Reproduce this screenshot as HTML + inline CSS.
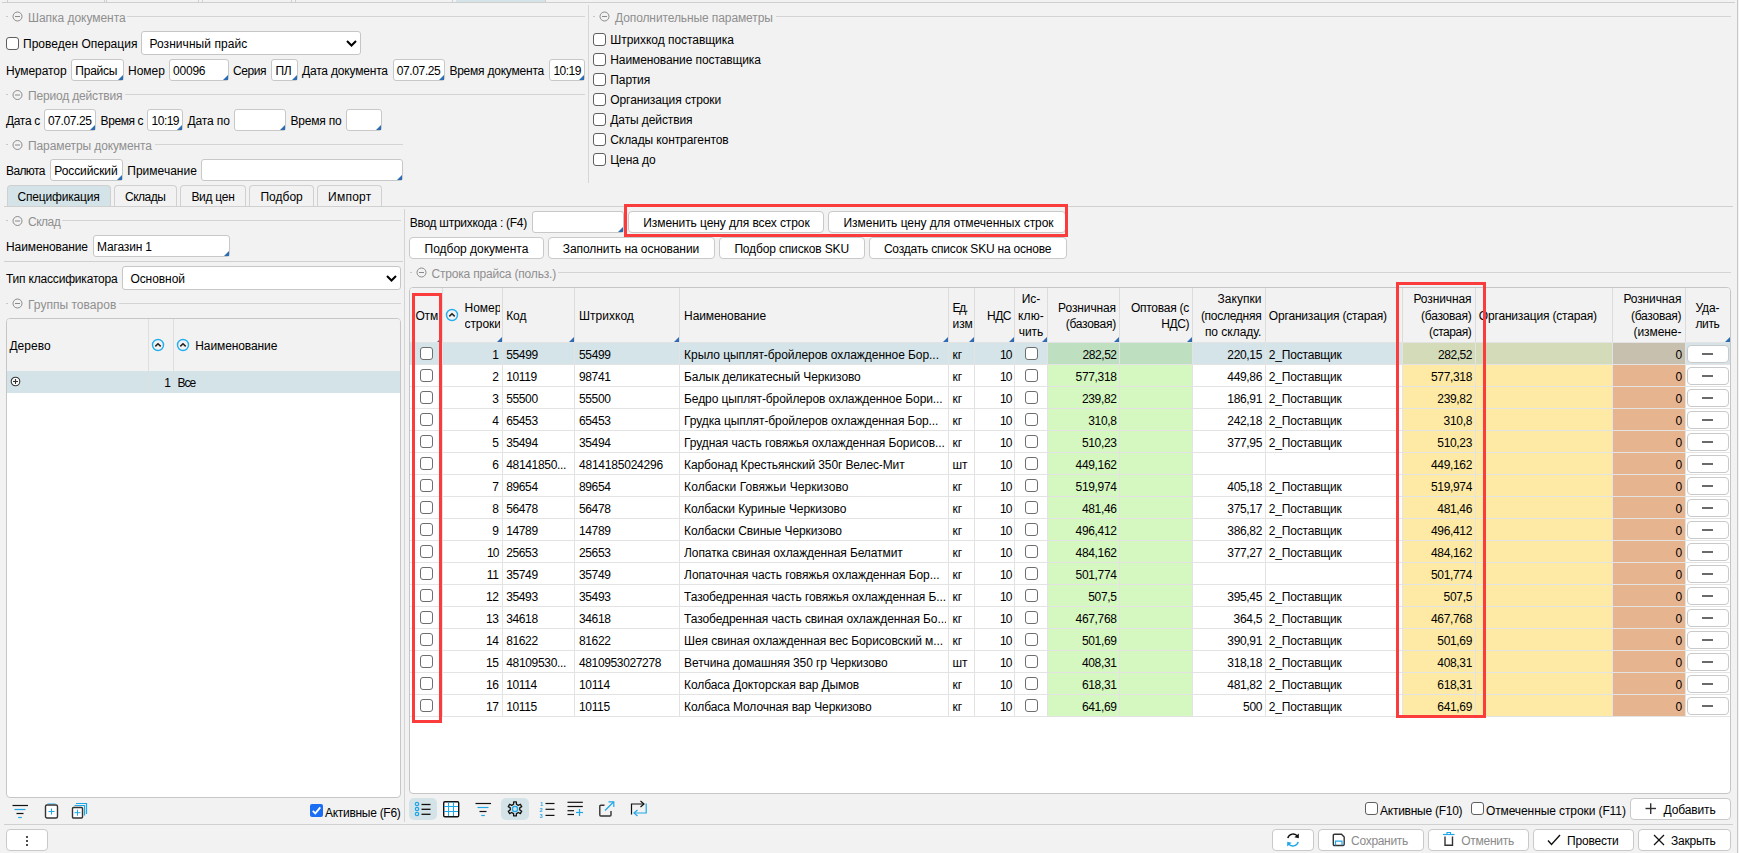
<!DOCTYPE html><html><head><meta charset="utf-8"><style>html,body{margin:0;padding:0;width:1739px;height:853px;overflow:hidden;background:#f2f2f2;position:relative;font-family:"Liberation Sans",sans-serif;font-size:12px;color:#000}.a{position:absolute}.t{position:absolute;white-space:nowrap;line-height:16px;height:16px}svg{overflow:visible}</style></head><body>
<div class="a" style="left:2px;top:2px;width:1733px;height:1px;background:#cfcfcf"></div>
<div class="a" style="left:7px;top:0px;width:1px;height:2px;background:#cfcfcf"></div>
<div class="a" style="left:104px;top:0px;width:1px;height:2px;background:#cfcfcf"></div>
<div class="a" style="left:106px;top:0px;width:1px;height:2px;background:#cfcfcf"></div>
<div class="a" style="left:198px;top:0px;width:1px;height:2px;background:#cfcfcf"></div>
<div class="a" style="left:202px;top:0px;width:1px;height:2px;background:#cfcfcf"></div>
<div class="a" style="left:291px;top:0px;width:1px;height:2px;background:#cfcfcf"></div>
<div class="a" style="left:295px;top:0px;width:1px;height:2px;background:#cfcfcf"></div>
<div class="a" style="left:452px;top:0px;width:1px;height:2px;background:#cfcfcf"></div>
<div class="a" style="left:545px;top:0px;width:1px;height:2px;background:#cfcfcf"></div>
<div class="a" style="left:456px;top:0px;width:89px;height:2px;background:#d4e3e8"></div>
<div class="a" style="left:1737px;top:0px;width:1px;height:853px;background:#c8c8c8"></div>
<div class="a" style="left:6px;top:16px;width:2px;height:1px;background:#c8c8c8"></div>
<svg class="a" style="left:11px;top:10px" width="12" height="12" viewBox="0 0 12 12"><circle cx="6.5" cy="6.5" r="4.5" fill="none" stroke="#8a8a8a" stroke-width="1"/><line x1="4.0" y1="6.5" x2="9.0" y2="6.5" stroke="#8a8a8a" stroke-width="1"/></svg>
<div class="t" style="left:28px;top:10px;color:#8f8f8f;font-size:12px;letter-spacing:-0.040px;">Шапка документа</div>
<div class="a" style="left:127px;top:16px;width:458px;height:1px;background:#d4d4d4"></div>
<div class="a" style="left:588px;top:5px;width:1px;height:178px;background:#d6d6d6"></div>
<div class="a" style="left:6px;top:37px;width:13px;height:13px;background:#fff;border:1px solid #5f5f5f;border-radius:3px;box-sizing:border-box"></div>
<div class="t" style="left:23px;top:36px;color:#000;font-size:12px;letter-spacing:0.013px;">Проведен Операция</div>
<div class="a" style="left:141px;top:31px;width:220px;height:24px;background:#fff;border:1px solid #c6c6c6;border-radius:3px;box-sizing:border-box"></div>
<div class="t" style="left:149.5px;top:36px;color:#000;font-size:12px;letter-spacing:0.051px;">Розничный прайс</div>
<svg class="a" style="left:345px;top:38px" width="13" height="10" viewBox="0 0 13 10"><polyline points="2,3 6.5,7.5 11,3" fill="none" stroke="#000" stroke-width="2"/></svg>
<div class="t" style="left:6px;top:63px;color:#000;font-size:12px;letter-spacing:-0.083px;">Нумератор</div>
<div class="a" style="left:71px;top:59px;width:53px;height:22px;background:#fff;border:1px solid #c8c8c8;border-radius:3px;box-sizing:border-box"></div>
<div class="a" style="left:118px;top:75px;width:0;height:0;border-left:5px solid transparent;border-bottom:5px solid #2b6cb3"></div>
<div class="t" style="left:75.3px;top:63px;color:#000;font-size:12px;letter-spacing:-0.235px;">Прайсы</div>
<div class="t" style="left:128px;top:63px;color:#000;font-size:12px;letter-spacing:-0.028px;">Номер</div>
<div class="a" style="left:169px;top:59px;width:60px;height:22px;background:#fff;border:1px solid #c8c8c8;border-radius:3px;box-sizing:border-box"></div>
<div class="a" style="left:223px;top:75px;width:0;height:0;border-left:5px solid transparent;border-bottom:5px solid #2b6cb3"></div>
<div class="t" style="left:173px;top:63px;color:#000;font-size:12px;letter-spacing:-0.215px;">00096</div>
<div class="t" style="left:233px;top:63px;color:#000;font-size:12px;letter-spacing:-0.404px;">Серия</div>
<div class="a" style="left:271px;top:59px;width:27px;height:22px;background:#fff;border:1px solid #c8c8c8;border-radius:3px;box-sizing:border-box"></div>
<div class="a" style="left:292px;top:75px;width:0;height:0;border-left:5px solid transparent;border-bottom:5px solid #2b6cb3"></div>
<div class="t" style="left:275.5px;top:63px;color:#000;font-size:12px;letter-spacing:-0.500px;">ПЛ</div>
<div class="t" style="left:302px;top:63px;color:#000;font-size:12px;letter-spacing:-0.187px;">Дата документа</div>
<div class="a" style="left:393px;top:59px;width:52px;height:22px;background:#fff;border:1px solid #c8c8c8;border-radius:3px;box-sizing:border-box"></div>
<div class="a" style="left:439px;top:75px;width:0;height:0;border-left:5px solid transparent;border-bottom:5px solid #2b6cb3"></div>
<div class="t" style="left:396.8px;top:63px;color:#000;font-size:12px;letter-spacing:-0.390px;">07.07.25</div>
<div class="t" style="left:449.4px;top:63px;color:#000;font-size:12px;letter-spacing:-0.224px;">Время документа</div>
<div class="a" style="left:549px;top:59px;width:36px;height:22px;background:#fff;border:1px solid #c8c8c8;border-radius:3px;box-sizing:border-box"></div>
<div class="a" style="left:579px;top:75px;width:0;height:0;border-left:5px solid transparent;border-bottom:5px solid #2b6cb3"></div>
<div class="t" style="left:553.4px;top:63px;color:#000;font-size:12px;letter-spacing:-0.526px;">10:19</div>
<div class="a" style="left:6px;top:94px;width:2px;height:1px;background:#c8c8c8"></div>
<svg class="a" style="left:11px;top:89px" width="12" height="12" viewBox="0 0 12 12"><circle cx="6.5" cy="6" r="4.5" fill="none" stroke="#8a8a8a" stroke-width="1"/><line x1="4.0" y1="6" x2="9.0" y2="6" stroke="#8a8a8a" stroke-width="1"/></svg>
<div class="t" style="left:28px;top:88px;color:#8f8f8f;font-size:12px;letter-spacing:-0.172px;">Период действия</div>
<div class="a" style="left:125px;top:94px;width:460px;height:1px;background:#d4d4d4"></div>
<div class="t" style="left:6px;top:112.7px;color:#000;font-size:12px;letter-spacing:-0.334px;">Дата с</div>
<div class="a" style="left:44px;top:109px;width:52px;height:22px;background:#fff;border:1px solid #c8c8c8;border-radius:3px;box-sizing:border-box"></div>
<div class="a" style="left:90px;top:125px;width:0;height:0;border-left:5px solid transparent;border-bottom:5px solid #2b6cb3"></div>
<div class="t" style="left:48px;top:112.7px;color:#000;font-size:12px;letter-spacing:-0.390px;">07.07.25</div>
<div class="t" style="left:100.6px;top:112.7px;color:#000;font-size:12px;letter-spacing:-0.420px;">Время с</div>
<div class="a" style="left:147px;top:109px;width:36px;height:22px;background:#fff;border:1px solid #c8c8c8;border-radius:3px;box-sizing:border-box"></div>
<div class="a" style="left:177px;top:125px;width:0;height:0;border-left:5px solid transparent;border-bottom:5px solid #2b6cb3"></div>
<div class="t" style="left:151.6px;top:112.7px;color:#000;font-size:12px;letter-spacing:-0.526px;">10:19</div>
<div class="t" style="left:187.5px;top:112.7px;color:#000;font-size:12px;letter-spacing:-0.125px;">Дата по</div>
<div class="a" style="left:234px;top:109px;width:52px;height:22px;background:#fff;border:1px solid #c8c8c8;border-radius:3px;box-sizing:border-box"></div>
<div class="a" style="left:280px;top:125px;width:0;height:0;border-left:5px solid transparent;border-bottom:5px solid #2b6cb3"></div>
<div class="t" style="left:290.4px;top:112.7px;color:#000;font-size:12px;letter-spacing:-0.189px;">Время по</div>
<div class="a" style="left:346px;top:109px;width:36px;height:22px;background:#fff;border:1px solid #c8c8c8;border-radius:3px;box-sizing:border-box"></div>
<div class="a" style="left:376px;top:125px;width:0;height:0;border-left:5px solid transparent;border-bottom:5px solid #2b6cb3"></div>
<div class="a" style="left:6px;top:144px;width:2px;height:1px;background:#c8c8c8"></div>
<svg class="a" style="left:11px;top:139px" width="12" height="12" viewBox="0 0 12 12"><circle cx="6.5" cy="6" r="4.5" fill="none" stroke="#8a8a8a" stroke-width="1"/><line x1="4.0" y1="6" x2="9.0" y2="6" stroke="#8a8a8a" stroke-width="1"/></svg>
<div class="t" style="left:28px;top:138px;color:#8f8f8f;font-size:12px;letter-spacing:-0.101px;">Параметры документа</div>
<div class="a" style="left:155px;top:144px;width:248px;height:1px;background:#d4d4d4"></div>
<div class="t" style="left:6px;top:163px;color:#000;font-size:12px;letter-spacing:-0.626px;">Валюта</div>
<div class="a" style="left:50px;top:159px;width:73px;height:22px;background:#fff;border:1px solid #c8c8c8;border-radius:3px;box-sizing:border-box"></div>
<div class="a" style="left:117px;top:175px;width:0;height:0;border-left:5px solid transparent;border-bottom:5px solid #2b6cb3"></div>
<div class="t" style="left:54.3px;top:163px;color:#000;font-size:12px;letter-spacing:-0.092px;">Российский</div>
<div class="t" style="left:127.3px;top:163px;color:#000;font-size:12px;letter-spacing:0.013px;">Примечание</div>
<div class="a" style="left:201px;top:159px;width:202px;height:22px;background:#fff;border:1px solid #c8c8c8;border-radius:3px;box-sizing:border-box"></div>
<div class="a" style="left:397px;top:175px;width:0;height:0;border-left:5px solid transparent;border-bottom:5px solid #2b6cb3"></div>
<div class="a" style="left:593px;top:16px;width:2px;height:1px;background:#c8c8c8"></div>
<svg class="a" style="left:598px;top:10px" width="12" height="12" viewBox="0 0 12 12"><circle cx="6.5" cy="6.5" r="4.5" fill="none" stroke="#8a8a8a" stroke-width="1"/><line x1="4.0" y1="6.5" x2="9.0" y2="6.5" stroke="#8a8a8a" stroke-width="1"/></svg>
<div class="t" style="left:615px;top:10px;color:#8f8f8f;font-size:12px;letter-spacing:-0.099px;">Дополнительные параметры</div>
<div class="a" style="left:776px;top:16px;width:955px;height:1px;background:#d4d4d4"></div>
<div class="a" style="left:593px;top:33px;width:13px;height:13px;background:#fff;border:1px solid #5f5f5f;border-radius:3px;box-sizing:border-box"></div>
<div class="t" style="left:610.3px;top:32px;color:#000;font-size:12px;letter-spacing:-0.040px;">Штрихкод поставщика</div>
<div class="a" style="left:593px;top:53px;width:13px;height:13px;background:#fff;border:1px solid #5f5f5f;border-radius:3px;box-sizing:border-box"></div>
<div class="t" style="left:610.3px;top:52px;color:#000;font-size:12px;letter-spacing:-0.100px;">Наименование поставщика</div>
<div class="a" style="left:593px;top:73px;width:13px;height:13px;background:#fff;border:1px solid #5f5f5f;border-radius:3px;box-sizing:border-box"></div>
<div class="t" style="left:610.3px;top:72px;color:#000;font-size:12px;letter-spacing:-0.101px;">Партия</div>
<div class="a" style="left:593px;top:93px;width:13px;height:13px;background:#fff;border:1px solid #5f5f5f;border-radius:3px;box-sizing:border-box"></div>
<div class="t" style="left:610.3px;top:92px;color:#000;font-size:12px;letter-spacing:-0.094px;">Организация строки</div>
<div class="a" style="left:593px;top:113px;width:13px;height:13px;background:#fff;border:1px solid #5f5f5f;border-radius:3px;box-sizing:border-box"></div>
<div class="t" style="left:610.3px;top:112px;color:#000;font-size:12px;letter-spacing:-0.096px;">Даты действия</div>
<div class="a" style="left:593px;top:133px;width:13px;height:13px;background:#fff;border:1px solid #5f5f5f;border-radius:3px;box-sizing:border-box"></div>
<div class="t" style="left:610.3px;top:132px;color:#000;font-size:12px;letter-spacing:-0.095px;">Склады контрагентов</div>
<div class="a" style="left:593px;top:153px;width:13px;height:13px;background:#fff;border:1px solid #5f5f5f;border-radius:3px;box-sizing:border-box"></div>
<div class="t" style="left:610.3px;top:152px;color:#000;font-size:12px;letter-spacing:-0.098px;">Цена до</div>
<div class="a" style="left:7px;top:185px;width:104px;height:21px;background:#d4e3e8;border:1px solid #d0d0d0;border-bottom:none;border-radius:4px 4px 0 0;box-sizing:border-box"></div>
<div class="t" style="left:17.5px;top:189px;color:#000;font-size:12px;letter-spacing:-0.180px;">Спецификация</div>
<div class="a" style="left:114px;top:185px;width:63px;height:21px;background:#f2f2f2;border:1px solid #d0d0d0;border-bottom:none;border-radius:4px 4px 0 0;box-sizing:border-box"></div>
<div class="t" style="left:125px;top:189px;color:#000;font-size:12px;letter-spacing:-0.477px;">Склады</div>
<div class="a" style="left:180px;top:185px;width:66px;height:21px;background:#f2f2f2;border:1px solid #d0d0d0;border-bottom:none;border-radius:4px 4px 0 0;box-sizing:border-box"></div>
<div class="t" style="left:191.4px;top:189px;color:#000;font-size:12px;letter-spacing:-0.271px;">Вид цен</div>
<div class="a" style="left:249px;top:185px;width:65px;height:21px;background:#f2f2f2;border:1px solid #d0d0d0;border-bottom:none;border-radius:4px 4px 0 0;box-sizing:border-box"></div>
<div class="t" style="left:260.4px;top:189px;color:#000;font-size:12px;letter-spacing:0.022px;">Подбор</div>
<div class="a" style="left:317px;top:185px;width:65px;height:21px;background:#f2f2f2;border:1px solid #d0d0d0;border-bottom:none;border-radius:4px 4px 0 0;box-sizing:border-box"></div>
<div class="t" style="left:328px;top:189px;color:#000;font-size:12px;letter-spacing:0.258px;">Импорт</div>
<div class="a" style="left:4px;top:206px;width:1729px;height:1px;background:#d0d0d0"></div>
<div class="a" style="left:6px;top:220px;width:2px;height:1px;background:#c8c8c8"></div>
<svg class="a" style="left:11px;top:215px" width="12" height="12" viewBox="0 0 12 12"><circle cx="6.5" cy="6" r="4.5" fill="none" stroke="#8a8a8a" stroke-width="1"/><line x1="4.0" y1="6" x2="9.0" y2="6" stroke="#8a8a8a" stroke-width="1"/></svg>
<div class="t" style="left:28px;top:214px;color:#8f8f8f;font-size:12px;letter-spacing:-0.507px;">Склад</div>
<div class="a" style="left:62px;top:220px;width:339px;height:1px;background:#d4d4d4"></div>
<div class="t" style="left:6px;top:238.5px;color:#000;font-size:12px;letter-spacing:-0.104px;">Наименование</div>
<div class="a" style="left:93px;top:235px;width:137px;height:22px;background:#fff;border:1px solid #c8c8c8;border-radius:3px;box-sizing:border-box"></div>
<div class="a" style="left:224px;top:251px;width:0;height:0;border-left:5px solid transparent;border-bottom:5px solid #2b6cb3"></div>
<div class="t" style="left:97px;top:238.5px;color:#000;font-size:12px;letter-spacing:-0.166px;">Магазин 1</div>
<div class="a" style="left:4px;top:261px;width:399px;height:1px;background:#d0d0d0"></div>
<div class="t" style="left:6px;top:271px;color:#000;font-size:12px;letter-spacing:-0.194px;">Тип классификатора</div>
<div class="a" style="left:122px;top:266px;width:279px;height:24px;background:#fff;border:1px solid #c6c6c6;border-radius:3px;box-sizing:border-box"></div>
<div class="t" style="left:130.4px;top:271px;color:#000;font-size:12px;letter-spacing:-0.064px;">Основной</div>
<svg class="a" style="left:385px;top:273px" width="13" height="10" viewBox="0 0 13 10"><polyline points="2,3 6.5,7.5 11,3" fill="none" stroke="#000" stroke-width="2"/></svg>
<div class="a" style="left:6px;top:303px;width:2px;height:1px;background:#c8c8c8"></div>
<svg class="a" style="left:11px;top:297px" width="12" height="12" viewBox="0 0 12 12"><circle cx="6.5" cy="6.5" r="4.5" fill="none" stroke="#8a8a8a" stroke-width="1"/><line x1="4.0" y1="6.5" x2="9.0" y2="6.5" stroke="#8a8a8a" stroke-width="1"/></svg>
<div class="t" style="left:28px;top:296.5px;color:#8f8f8f;font-size:12px;letter-spacing:0.021px;">Группы товаров</div>
<div class="a" style="left:119px;top:303px;width:282px;height:1px;background:#d4d4d4"></div>
<div class="a" style="left:404px;top:209px;width:1px;height:613px;background:#d4d4d4"></div>
<div class="a" style="left:6px;top:318px;width:395px;height:480px;background:#fff;border:1px solid #c6c6c6;border-radius:4px;box-sizing:border-box"></div>
<div class="a" style="left:7px;top:319px;width:393px;height:52px;background:#f2f2f2;border-radius:3px 3px 0 0"></div>
<div class="a" style="left:7px;top:371px;width:393px;height:22px;background:#d4e3e8"></div>
<div class="a" style="left:148px;top:319px;width:1px;height:74px;background:#dedede"></div>
<div class="a" style="left:173px;top:319px;width:1px;height:74px;background:#dedede"></div>
<div class="t" style="left:9.4px;top:338px;color:#000;font-size:12px;letter-spacing:0.040px;">Дерево</div>
<svg class="a" style="left:151px;top:338px" width="14" height="14" viewBox="0 0 14 14"><circle cx="7" cy="7" r="5.5" fill="none" stroke="#22aeee" stroke-width="1.4"/><polyline points="4.3,8.4 7,5.7 9.7,8.4" fill="none" stroke="#222" stroke-width="1.5"/></svg>
<svg class="a" style="left:176px;top:338px" width="14" height="14" viewBox="0 0 14 14"><circle cx="7" cy="7" r="5.5" fill="none" stroke="#22aeee" stroke-width="1.4"/><polyline points="4.3,8.4 7,5.7 9.7,8.4" fill="none" stroke="#222" stroke-width="1.5"/></svg>
<div class="t" style="left:195.3px;top:338px;color:#000;font-size:12px;letter-spacing:-0.104px;">Наименование</div>
<svg class="a" style="left:10px;top:376px" width="11" height="11" viewBox="0 0 11 11"><circle cx="5.5" cy="5.5" r="4.3" fill="#fff" stroke="#333" stroke-width="1.1"/><line x1="3" y1="5.5" x2="8" y2="5.5" stroke="#333" stroke-width="1.1"/><line x1="5.5" y1="3" x2="5.5" y2="8" stroke="#333" stroke-width="1.1"/></svg>
<div class="t" style="left:-129.4px;width:300px;text-align:right;top:374.6px;color:#000;letter-spacing:-0.368px;">1</div>
<div class="t" style="left:177.4px;top:374.6px;color:#000;font-size:12px;letter-spacing:-0.929px;">Все</div>
<svg class="a" style="left:12px;top:804px" width="18" height="16" viewBox="0 0 18 16"><line x1="0.5" y1="1.5" x2="16" y2="1.5" stroke="#111" stroke-width="1.2"/><line x1="2.5" y1="5.5" x2="13.5" y2="5.5" stroke="#1ea7e8" stroke-width="1.2"/><line x1="4.5" y1="9.5" x2="11.5" y2="9.5" stroke="#111" stroke-width="1.2"/><line x1="6.2" y1="13.5" x2="9.8" y2="13.5" stroke="#1ea7e8" stroke-width="1.2"/></svg>
<svg class="a" style="left:44px;top:802px" width="16" height="18" viewBox="0 0 16 18"><line x1="3.5" y1="1.5" x2="11.5" y2="1.5" stroke="#7fd0f5" stroke-width="1"/><rect x="1.5" y="3" width="12" height="13" rx="1.5" fill="#fff" stroke="#333" stroke-width="1.4"/><line x1="4.5" y1="9.5" x2="10.5" y2="9.5" stroke="#1ea7e8" stroke-width="1"/><line x1="7.5" y1="6.5" x2="7.5" y2="12.5" stroke="#1ea7e8" stroke-width="1"/></svg>
<svg class="a" style="left:71px;top:802px" width="18" height="18" viewBox="0 0 18 18"><polyline points="5,1.5 15.5,1.5 15.5,12" fill="none" stroke="#1ea7e8" stroke-width="1.2"/><polyline points="3.5,3.5 13.5,3.5 13.5,13.5" fill="none" stroke="#1ea7e8" stroke-width="1.2"/><rect x="1.5" y="5.5" width="10" height="10.5" rx="1" fill="#fff" stroke="#333" stroke-width="1.4"/><line x1="3.5" y1="10.7" x2="9.5" y2="10.7" stroke="#1ea7e8" stroke-width="1"/><line x1="6.5" y1="7.7" x2="6.5" y2="13.7" stroke="#1ea7e8" stroke-width="1"/></svg>
<div class="a" style="left:310px;top:804px;width:13px;height:13px;background:#1b6ef3;border-radius:2px"></div>
<svg class="a" style="left:310px;top:804px" width="13" height="13" viewBox="0 0 13 13"><polyline points="2.8,6.8 5.3,9.3 10.3,3.3" fill="none" stroke="#fff" stroke-width="1.8"/></svg>
<div class="t" style="left:325px;top:805px;color:#000;font-size:12px;letter-spacing:-0.286px;">Активные (F6)</div>
<div class="a" style="left:4px;top:824px;width:1729px;height:1px;background:#d0d0d0"></div>
<div class="a" style="left:6px;top:829px;width:42px;height:22px;background:#fff;border:1px solid #c9c9c9;border-radius:4px;box-sizing:border-box"></div>
<div class="a" style="left:25.5px;top:836px;width:2.0px;height:2px;background:#111;border-radius:1px"></div>
<div class="a" style="left:25.5px;top:840px;width:2.0px;height:2px;background:#111;border-radius:1px"></div>
<div class="a" style="left:25.5px;top:844px;width:2.0px;height:2px;background:#111;border-radius:1px"></div>
<div class="t" style="left:409.7px;top:214.8px;color:#000;font-size:12px;letter-spacing:-0.270px;">Ввод штрихкода : (F4)</div>
<div class="a" style="left:532px;top:211px;width:92px;height:22px;background:#fff;border:1px solid #c8c8c8;border-radius:3px;box-sizing:border-box"></div>
<div class="a" style="left:618px;top:227px;width:0;height:0;border-left:5px solid transparent;border-bottom:5px solid #2b6cb3"></div>
<div class="a" style="left:628px;top:211px;width:196px;height:22px;background:#fff;border:1px solid #c9c9c9;border-radius:4px;box-sizing:border-box"></div>
<div class="t" style="left:643.3px;top:215px;color:#000;font-size:12px;letter-spacing:-0.087px;">Изменить цену для всех строк</div>
<div class="a" style="left:828px;top:211px;width:238px;height:22px;background:#fff;border:1px solid #c9c9c9;border-radius:4px;box-sizing:border-box"></div>
<div class="t" style="left:843.5px;top:215px;color:#000;font-size:12px;letter-spacing:-0.037px;">Изменить цену для отмеченных строк</div>
<div class="a" style="left:409px;top:237px;width:135px;height:22px;background:#fff;border:1px solid #c9c9c9;border-radius:4px;box-sizing:border-box"></div>
<div class="t" style="left:424.6px;top:241px;color:#000;font-size:12px;letter-spacing:-0.026px;">Подбор документа</div>
<div class="a" style="left:548px;top:237px;width:167px;height:22px;background:#fff;border:1px solid #c9c9c9;border-radius:4px;box-sizing:border-box"></div>
<div class="t" style="left:562.8px;top:241px;color:#000;font-size:12px;letter-spacing:-0.064px;">Заполнить на основании</div>
<div class="a" style="left:719px;top:237px;width:146px;height:22px;background:#fff;border:1px solid #c9c9c9;border-radius:4px;box-sizing:border-box"></div>
<div class="t" style="left:734.4px;top:241px;color:#000;font-size:12px;letter-spacing:-0.152px;">Подбор списков SKU</div>
<div class="a" style="left:869px;top:237px;width:198px;height:22px;background:#fff;border:1px solid #c9c9c9;border-radius:4px;box-sizing:border-box"></div>
<div class="t" style="left:883.9px;top:241px;color:#000;font-size:12px;letter-spacing:-0.206px;">Создать список SKU на основе</div>
<div class="a" style="left:624px;top:204px;width:444px;height:33px;border:3px solid #fb3c3c;box-sizing:border-box"></div>
<div class="a" style="left:410px;top:272px;width:2px;height:1px;background:#c8c8c8"></div>
<svg class="a" style="left:415px;top:266px" width="12" height="12" viewBox="0 0 12 12"><circle cx="6.5" cy="6.5" r="4.5" fill="none" stroke="#8a8a8a" stroke-width="1"/><line x1="4.0" y1="6.5" x2="9.0" y2="6.5" stroke="#8a8a8a" stroke-width="1"/></svg>
<div class="t" style="left:431.5px;top:265.5px;color:#8f8f8f;font-size:12px;letter-spacing:-0.185px;">Строка прайса (польз.)</div>
<div class="a" style="left:558px;top:272px;width:1173px;height:1px;background:#d4d4d4"></div>
<div class="a" style="left:409px;top:287px;width:1322px;height:507px;background:#fff;border:1px solid #c6c6c6;border-radius:4px;box-sizing:border-box"></div>
<div class="a" style="left:410px;top:288px;width:1320px;height:54px;background:#f2f2f2;border-radius:3px 3px 0 0"></div>
<div class="a" style="left:442px;top:288px;width:1px;height:54px;background:#dcdcdc"></div>
<div class="a" style="left:502px;top:288px;width:1px;height:54px;background:#dcdcdc"></div>
<div class="a" style="left:574px;top:288px;width:1px;height:54px;background:#dcdcdc"></div>
<div class="a" style="left:679px;top:288px;width:1px;height:54px;background:#dcdcdc"></div>
<div class="a" style="left:948px;top:288px;width:1px;height:54px;background:#dcdcdc"></div>
<div class="a" style="left:974px;top:288px;width:1px;height:54px;background:#dcdcdc"></div>
<div class="a" style="left:1014px;top:288px;width:1px;height:54px;background:#dcdcdc"></div>
<div class="a" style="left:1047px;top:288px;width:1px;height:54px;background:#dcdcdc"></div>
<div class="a" style="left:1119px;top:288px;width:1px;height:54px;background:#dcdcdc"></div>
<div class="a" style="left:1192px;top:288px;width:1px;height:54px;background:#dcdcdc"></div>
<div class="a" style="left:1265px;top:288px;width:1px;height:54px;background:#dcdcdc"></div>
<div class="a" style="left:1402px;top:288px;width:1px;height:54px;background:#dcdcdc"></div>
<div class="a" style="left:1475px;top:288px;width:1px;height:54px;background:#dcdcdc"></div>
<div class="a" style="left:1612px;top:288px;width:1px;height:54px;background:#dcdcdc"></div>
<div class="a" style="left:1685px;top:288px;width:1px;height:54px;background:#dcdcdc"></div>
<div class="a" style="left:437px;top:337px;width:0;height:0;border-left:5px solid transparent;border-bottom:5px solid #2b6cb3"></div>
<div class="a" style="left:497px;top:337px;width:0;height:0;border-left:5px solid transparent;border-bottom:5px solid #2b6cb3"></div>
<div class="a" style="left:569px;top:337px;width:0;height:0;border-left:5px solid transparent;border-bottom:5px solid #2b6cb3"></div>
<div class="a" style="left:674px;top:337px;width:0;height:0;border-left:5px solid transparent;border-bottom:5px solid #2b6cb3"></div>
<div class="a" style="left:943px;top:337px;width:0;height:0;border-left:5px solid transparent;border-bottom:5px solid #2b6cb3"></div>
<div class="a" style="left:969px;top:337px;width:0;height:0;border-left:5px solid transparent;border-bottom:5px solid #2b6cb3"></div>
<div class="a" style="left:1009px;top:337px;width:0;height:0;border-left:5px solid transparent;border-bottom:5px solid #2b6cb3"></div>
<div class="a" style="left:1042px;top:337px;width:0;height:0;border-left:5px solid transparent;border-bottom:5px solid #2b6cb3"></div>
<div class="a" style="left:1114px;top:337px;width:0;height:0;border-left:5px solid transparent;border-bottom:5px solid #2b6cb3"></div>
<div class="a" style="left:1187px;top:337px;width:0;height:0;border-left:5px solid transparent;border-bottom:5px solid #2b6cb3"></div>
<div class="a" style="left:1725px;top:337px;width:0;height:0;border-left:5px solid transparent;border-bottom:5px solid #2b6cb3"></div>
<div class="t" style="left:415.4px;top:308px;color:#000;font-size:12px;letter-spacing:-0.115px;width:26px;overflow:hidden">Отм</div>
<svg class="a" style="left:445px;top:308px" width="14" height="14" viewBox="0 0 14 14"><circle cx="7" cy="7" r="5.5" fill="none" stroke="#22aeee" stroke-width="1.4"/><polyline points="4.3,8.4 7,5.7 9.7,8.4" fill="none" stroke="#222" stroke-width="1.5"/></svg>
<div class="t" style="left:464.5px;top:299.6px;color:#000;font-size:12px;letter-spacing:-0.028px;width:35px;overflow:hidden">Номер</div>
<div class="t" style="left:464.5px;top:315.5px;color:#000;font-size:12px;letter-spacing:-0.092px;width:35px;overflow:hidden">строки</div>
<div class="t" style="left:506.2px;top:308px;color:#000;font-size:12px;letter-spacing:-0.102px;">Код</div>
<div class="t" style="left:579px;top:308px;color:#000;font-size:12px;letter-spacing:0.029px;">Штрихкод</div>
<div class="t" style="left:684.1px;top:308px;color:#000;font-size:12px;letter-spacing:-0.104px;">Наименование</div>
<div class="t" style="left:952.6px;top:299.6px;color:#000;font-size:12px;letter-spacing:-1.281px;">Ед.</div>
<div class="t" style="left:952.6px;top:315.5px;color:#000;font-size:12px;letter-spacing:-0.102px;width:20px;overflow:hidden">изм</div>
<div class="t" style="left:711px;width:300px;text-align:right;top:308px;color:#000;letter-spacing:-0.490px;">НДС</div>
<div class="t" style="left:881px;width:300px;text-align:center;top:291.4px;color:#000;letter-spacing:-0.108px;">Ис-</div>
<div class="t" style="left:881px;width:300px;text-align:center;top:307.5px;color:#000;letter-spacing:0.127px;">клю-</div>
<div class="t" style="left:881px;width:300px;text-align:center;top:323.5px;color:#000;letter-spacing:-0.101px;">чить</div>
<div class="t" style="left:816px;width:300px;text-align:right;top:299.6px;color:#000;letter-spacing:-0.112px;">Розничная</div>
<div class="t" style="left:816px;width:300px;text-align:right;top:315.5px;color:#000;letter-spacing:-0.255px;">(базовая)</div>
<div class="t" style="left:889px;width:300px;text-align:right;top:299.6px;color:#000;letter-spacing:-0.251px;">Оптовая (с</div>
<div class="t" style="left:889px;width:300px;text-align:right;top:315.5px;color:#000;letter-spacing:-0.442px;">НДС)</div>
<div class="t" style="left:961.4000000000001px;width:300px;text-align:right;top:291.4px;color:#000;letter-spacing:0.005px;">Закупки</div>
<div class="t" style="left:961.4000000000001px;width:300px;text-align:right;top:307.5px;color:#000;letter-spacing:-0.272px;">(последняя</div>
<div class="t" style="left:961.4000000000001px;width:300px;text-align:right;top:323.5px;color:#000;letter-spacing:-0.020px;">по складу.</div>
<div class="t" style="left:1268.8px;top:308px;color:#000;font-size:12px;letter-spacing:-0.175px;">Организация (старая)</div>
<div class="t" style="left:1171.4px;width:300px;text-align:right;top:291.4px;color:#000;letter-spacing:-0.112px;">Розничная</div>
<div class="t" style="left:1171.4px;width:300px;text-align:right;top:307.5px;color:#000;letter-spacing:-0.255px;">(базовая)</div>
<div class="t" style="left:1171.4px;width:300px;text-align:right;top:323.5px;color:#000;letter-spacing:-0.447px;">(старая)</div>
<div class="t" style="left:1478.8px;top:308px;color:#000;font-size:12px;letter-spacing:-0.175px;">Организация (старая)</div>
<div class="t" style="left:1381.3px;width:300px;text-align:right;top:291.4px;color:#000;letter-spacing:-0.112px;">Розничная</div>
<div class="t" style="left:1381.3px;width:300px;text-align:right;top:307.5px;color:#000;letter-spacing:-0.255px;">(базовая)</div>
<div class="t" style="left:1381.3px;width:300px;text-align:right;top:323.5px;color:#000;letter-spacing:-0.090px;">(измене-</div>
<div class="t" style="left:1557.5px;width:300px;text-align:center;top:299.6px;color:#000;letter-spacing:-0.090px;">Уда-</div>
<div class="t" style="left:1557.5px;width:300px;text-align:center;top:315.5px;color:#000;letter-spacing:-0.363px;">лить</div>
<div class="a" style="left:410px;top:343px;width:1320px;height:21px;background:#d4e4e9"></div>
<div class="a" style="left:1047px;top:343px;width:145px;height:21px;background:#bfe0c0"></div>
<div class="a" style="left:1402px;top:343px;width:210px;height:21px;background:#d3dbb8"></div>
<div class="a" style="left:1612px;top:343px;width:73px;height:21px;background:#c8c0ae"></div>
<div class="a" style="left:420px;top:347px;width:13px;height:13px;background:#fff;border:1px solid #6e6e6e;border-radius:3px;box-sizing:border-box"></div>
<div class="t" style="left:198.60000000000002px;width:300px;text-align:right;top:346.5px;color:#000;letter-spacing:-0.368px;">1</div>
<div class="t" style="left:506.2px;top:346.5px;color:#000;font-size:12px;letter-spacing:-0.335px;">55499</div>
<div class="t" style="left:579px;top:346.5px;color:#000;font-size:12px;letter-spacing:-0.335px;">55499</div>
<div class="t" style="left:684.1px;top:346.5px;color:#000;font-size:12px;letter-spacing:-0.057px;width:262px;overflow:hidden">Крыло цыплят-бройлеров охлажденное Бор...</div>
<div class="t" style="left:952.6px;top:346.5px;color:#000;font-size:12px;letter-spacing:-0.072px;">кг</div>
<div class="t" style="left:711.6px;width:300px;text-align:right;top:346.5px;color:#000;letter-spacing:-0.830px;">10</div>
<div class="a" style="left:1025px;top:347px;width:13px;height:13px;background:#fff;border:1px solid #6e6e6e;border-radius:3px;box-sizing:border-box"></div>
<div class="t" style="left:816.5999999999999px;width:300px;text-align:right;top:346.5px;color:#000;letter-spacing:-0.451px;">282,52</div>
<div class="t" style="left:962.0px;width:300px;text-align:right;top:346.5px;color:#000;letter-spacing:-0.336px;">220,15</div>
<div class="t" style="left:1268.8px;top:346.5px;color:#000;font-size:12px;letter-spacing:-0.190px;">2_Поставщик</div>
<div class="t" style="left:1172.0px;width:300px;text-align:right;top:346.5px;color:#000;letter-spacing:-0.451px;">282,52</div>
<div class="t" style="left:1381.8999999999999px;width:300px;text-align:right;top:346.5px;color:#000;letter-spacing:-0.368px;">0</div>
<div class="a" style="left:1687px;top:345px;width:42px;height:18px;background:#fff;border:1px solid #c9c9c9;border-radius:4px;box-sizing:border-box"></div>
<div class="a" style="left:1702px;top:353px;width:11px;height:2px;background:#6a6a6a"></div>
<div class="a" style="left:410px;top:364px;width:1320px;height:22px;background:#fff"></div>
<div class="a" style="left:1047px;top:364px;width:145px;height:22px;background:#d5f7c0"></div>
<div class="a" style="left:1402px;top:364px;width:210px;height:22px;background:#feeaa5"></div>
<div class="a" style="left:1612px;top:364px;width:73px;height:22px;background:#e7b490"></div>
<div class="a" style="left:420px;top:369px;width:13px;height:13px;background:#fff;border:1px solid #6e6e6e;border-radius:3px;box-sizing:border-box"></div>
<div class="t" style="left:198.60000000000002px;width:300px;text-align:right;top:368.5px;color:#000;letter-spacing:-0.368px;">2</div>
<div class="t" style="left:506.2px;top:368.5px;color:#000;font-size:12px;letter-spacing:-0.357px;">10119</div>
<div class="t" style="left:579px;top:368.5px;color:#000;font-size:12px;letter-spacing:-0.367px;">98741</div>
<div class="t" style="left:684.1px;top:368.5px;color:#000;font-size:12px;letter-spacing:-0.095px;width:262px;overflow:hidden">Балык деликатесный Черкизово</div>
<div class="t" style="left:952.6px;top:368.5px;color:#000;font-size:12px;letter-spacing:-0.072px;">кг</div>
<div class="t" style="left:711.6px;width:300px;text-align:right;top:368.5px;color:#000;letter-spacing:-0.830px;">10</div>
<div class="a" style="left:1025px;top:369px;width:13px;height:13px;background:#fff;border:1px solid #6e6e6e;border-radius:3px;box-sizing:border-box"></div>
<div class="t" style="left:816.5999999999999px;width:300px;text-align:right;top:368.5px;color:#000;letter-spacing:-0.341px;">577,318</div>
<div class="t" style="left:962.0px;width:300px;text-align:right;top:368.5px;color:#000;letter-spacing:-0.336px;">449,86</div>
<div class="t" style="left:1268.8px;top:368.5px;color:#000;font-size:12px;letter-spacing:-0.190px;">2_Поставщик</div>
<div class="t" style="left:1172.0px;width:300px;text-align:right;top:368.5px;color:#000;letter-spacing:-0.341px;">577,318</div>
<div class="t" style="left:1381.8999999999999px;width:300px;text-align:right;top:368.5px;color:#000;letter-spacing:-0.368px;">0</div>
<div class="a" style="left:1687px;top:367px;width:42px;height:18px;background:#fff;border:1px solid #c9c9c9;border-radius:4px;box-sizing:border-box"></div>
<div class="a" style="left:1702px;top:375px;width:11px;height:2px;background:#6a6a6a"></div>
<div class="a" style="left:410px;top:386px;width:1320px;height:22px;background:#fff"></div>
<div class="a" style="left:1047px;top:386px;width:145px;height:22px;background:#d5f7c0"></div>
<div class="a" style="left:1402px;top:386px;width:210px;height:22px;background:#feeaa5"></div>
<div class="a" style="left:1612px;top:386px;width:73px;height:22px;background:#e7b490"></div>
<div class="a" style="left:420px;top:391px;width:13px;height:13px;background:#fff;border:1px solid #6e6e6e;border-radius:3px;box-sizing:border-box"></div>
<div class="t" style="left:198.60000000000002px;width:300px;text-align:right;top:390.5px;color:#000;letter-spacing:-0.368px;">3</div>
<div class="t" style="left:506.2px;top:390.5px;color:#000;font-size:12px;letter-spacing:-0.367px;">55500</div>
<div class="t" style="left:579px;top:390.5px;color:#000;font-size:12px;letter-spacing:-0.367px;">55500</div>
<div class="t" style="left:684.1px;top:390.5px;color:#000;font-size:12px;letter-spacing:-0.094px;width:262px;overflow:hidden">Бедро цыплят-бройлеров охлажденное Бори...</div>
<div class="t" style="left:952.6px;top:390.5px;color:#000;font-size:12px;letter-spacing:-0.072px;">кг</div>
<div class="t" style="left:711.6px;width:300px;text-align:right;top:390.5px;color:#000;letter-spacing:-0.830px;">10</div>
<div class="a" style="left:1025px;top:391px;width:13px;height:13px;background:#fff;border:1px solid #6e6e6e;border-radius:3px;box-sizing:border-box"></div>
<div class="t" style="left:816.5999999999999px;width:300px;text-align:right;top:390.5px;color:#000;letter-spacing:-0.336px;">239,82</div>
<div class="t" style="left:962.0px;width:300px;text-align:right;top:390.5px;color:#000;letter-spacing:-0.336px;">186,91</div>
<div class="t" style="left:1268.8px;top:390.5px;color:#000;font-size:12px;letter-spacing:-0.190px;">2_Поставщик</div>
<div class="t" style="left:1172.0px;width:300px;text-align:right;top:390.5px;color:#000;letter-spacing:-0.336px;">239,82</div>
<div class="t" style="left:1381.8999999999999px;width:300px;text-align:right;top:390.5px;color:#000;letter-spacing:-0.368px;">0</div>
<div class="a" style="left:1687px;top:389px;width:42px;height:18px;background:#fff;border:1px solid #c9c9c9;border-radius:4px;box-sizing:border-box"></div>
<div class="a" style="left:1702px;top:397px;width:11px;height:2px;background:#6a6a6a"></div>
<div class="a" style="left:410px;top:408px;width:1320px;height:22px;background:#fff"></div>
<div class="a" style="left:1047px;top:408px;width:145px;height:22px;background:#d5f7c0"></div>
<div class="a" style="left:1402px;top:408px;width:210px;height:22px;background:#feeaa5"></div>
<div class="a" style="left:1612px;top:408px;width:73px;height:22px;background:#e7b490"></div>
<div class="a" style="left:420px;top:413px;width:13px;height:13px;background:#fff;border:1px solid #6e6e6e;border-radius:3px;box-sizing:border-box"></div>
<div class="t" style="left:198.60000000000002px;width:300px;text-align:right;top:412.5px;color:#000;letter-spacing:-0.368px;">4</div>
<div class="t" style="left:506.2px;top:412.5px;color:#000;font-size:12px;letter-spacing:-0.367px;">65453</div>
<div class="t" style="left:579px;top:412.5px;color:#000;font-size:12px;letter-spacing:-0.367px;">65453</div>
<div class="t" style="left:684.1px;top:412.5px;color:#000;font-size:12px;letter-spacing:-0.092px;width:262px;overflow:hidden">Грудка цыплят-бройлеров охлажденная Бор...</div>
<div class="t" style="left:952.6px;top:412.5px;color:#000;font-size:12px;letter-spacing:-0.072px;">кг</div>
<div class="t" style="left:711.6px;width:300px;text-align:right;top:412.5px;color:#000;letter-spacing:-0.830px;">10</div>
<div class="a" style="left:1025px;top:413px;width:13px;height:13px;background:#fff;border:1px solid #6e6e6e;border-radius:3px;box-sizing:border-box"></div>
<div class="t" style="left:816.5999999999999px;width:300px;text-align:right;top:412.5px;color:#000;letter-spacing:-0.330px;">310,8</div>
<div class="t" style="left:962.0px;width:300px;text-align:right;top:412.5px;color:#000;letter-spacing:-0.336px;">242,18</div>
<div class="t" style="left:1268.8px;top:412.5px;color:#000;font-size:12px;letter-spacing:-0.190px;">2_Поставщик</div>
<div class="t" style="left:1172.0px;width:300px;text-align:right;top:412.5px;color:#000;letter-spacing:-0.330px;">310,8</div>
<div class="t" style="left:1381.8999999999999px;width:300px;text-align:right;top:412.5px;color:#000;letter-spacing:-0.368px;">0</div>
<div class="a" style="left:1687px;top:411px;width:42px;height:18px;background:#fff;border:1px solid #c9c9c9;border-radius:4px;box-sizing:border-box"></div>
<div class="a" style="left:1702px;top:419px;width:11px;height:2px;background:#6a6a6a"></div>
<div class="a" style="left:410px;top:430px;width:1320px;height:22px;background:#fff"></div>
<div class="a" style="left:1047px;top:430px;width:145px;height:22px;background:#d5f7c0"></div>
<div class="a" style="left:1402px;top:430px;width:210px;height:22px;background:#feeaa5"></div>
<div class="a" style="left:1612px;top:430px;width:73px;height:22px;background:#e7b490"></div>
<div class="a" style="left:420px;top:435px;width:13px;height:13px;background:#fff;border:1px solid #6e6e6e;border-radius:3px;box-sizing:border-box"></div>
<div class="t" style="left:198.60000000000002px;width:300px;text-align:right;top:434.5px;color:#000;letter-spacing:-0.368px;">5</div>
<div class="t" style="left:506.2px;top:434.5px;color:#000;font-size:12px;letter-spacing:-0.367px;">35494</div>
<div class="t" style="left:579px;top:434.5px;color:#000;font-size:12px;letter-spacing:-0.367px;">35494</div>
<div class="t" style="left:684.1px;top:434.5px;color:#000;font-size:12px;letter-spacing:-0.090px;width:262px;overflow:hidden">Грудная часть говяжья охлажденная Борисов...</div>
<div class="t" style="left:952.6px;top:434.5px;color:#000;font-size:12px;letter-spacing:-0.072px;">кг</div>
<div class="t" style="left:711.6px;width:300px;text-align:right;top:434.5px;color:#000;letter-spacing:-0.830px;">10</div>
<div class="a" style="left:1025px;top:435px;width:13px;height:13px;background:#fff;border:1px solid #6e6e6e;border-radius:3px;box-sizing:border-box"></div>
<div class="t" style="left:816.5999999999999px;width:300px;text-align:right;top:434.5px;color:#000;letter-spacing:-0.336px;">510,23</div>
<div class="t" style="left:962.0px;width:300px;text-align:right;top:434.5px;color:#000;letter-spacing:-0.336px;">377,95</div>
<div class="t" style="left:1268.8px;top:434.5px;color:#000;font-size:12px;letter-spacing:-0.190px;">2_Поставщик</div>
<div class="t" style="left:1172.0px;width:300px;text-align:right;top:434.5px;color:#000;letter-spacing:-0.336px;">510,23</div>
<div class="t" style="left:1381.8999999999999px;width:300px;text-align:right;top:434.5px;color:#000;letter-spacing:-0.368px;">0</div>
<div class="a" style="left:1687px;top:433px;width:42px;height:18px;background:#fff;border:1px solid #c9c9c9;border-radius:4px;box-sizing:border-box"></div>
<div class="a" style="left:1702px;top:441px;width:11px;height:2px;background:#6a6a6a"></div>
<div class="a" style="left:410px;top:452px;width:1320px;height:22px;background:#fff"></div>
<div class="a" style="left:1047px;top:452px;width:145px;height:22px;background:#d5f7c0"></div>
<div class="a" style="left:1402px;top:452px;width:210px;height:22px;background:#feeaa5"></div>
<div class="a" style="left:1612px;top:452px;width:73px;height:22px;background:#e7b490"></div>
<div class="a" style="left:420px;top:457px;width:13px;height:13px;background:#fff;border:1px solid #6e6e6e;border-radius:3px;box-sizing:border-box"></div>
<div class="t" style="left:198.60000000000002px;width:300px;text-align:right;top:456.5px;color:#000;letter-spacing:-0.368px;">6</div>
<div class="t" style="left:506.2px;top:456.5px;color:#000;font-size:12px;letter-spacing:-0.317px;">48141850...</div>
<div class="t" style="left:579px;top:456.5px;color:#000;font-size:12px;letter-spacing:-0.220px;">4814185024296</div>
<div class="t" style="left:684.1px;top:456.5px;color:#000;font-size:12px;letter-spacing:-0.114px;width:262px;overflow:hidden">Карбонад Крестьянский 350г Велес-Мит</div>
<div class="t" style="left:952.6px;top:456.5px;color:#000;font-size:12px;letter-spacing:-0.113px;">шт</div>
<div class="t" style="left:711.6px;width:300px;text-align:right;top:456.5px;color:#000;letter-spacing:-0.830px;">10</div>
<div class="a" style="left:1025px;top:457px;width:13px;height:13px;background:#fff;border:1px solid #6e6e6e;border-radius:3px;box-sizing:border-box"></div>
<div class="t" style="left:816.5999999999999px;width:300px;text-align:right;top:456.5px;color:#000;letter-spacing:-0.341px;">449,162</div>
<div class="t" style="left:1172.0px;width:300px;text-align:right;top:456.5px;color:#000;letter-spacing:-0.341px;">449,162</div>
<div class="t" style="left:1381.8999999999999px;width:300px;text-align:right;top:456.5px;color:#000;letter-spacing:-0.368px;">0</div>
<div class="a" style="left:1687px;top:455px;width:42px;height:18px;background:#fff;border:1px solid #c9c9c9;border-radius:4px;box-sizing:border-box"></div>
<div class="a" style="left:1702px;top:463px;width:11px;height:2px;background:#6a6a6a"></div>
<div class="a" style="left:410px;top:474px;width:1320px;height:22px;background:#fff"></div>
<div class="a" style="left:1047px;top:474px;width:145px;height:22px;background:#d5f7c0"></div>
<div class="a" style="left:1402px;top:474px;width:210px;height:22px;background:#feeaa5"></div>
<div class="a" style="left:1612px;top:474px;width:73px;height:22px;background:#e7b490"></div>
<div class="a" style="left:420px;top:479px;width:13px;height:13px;background:#fff;border:1px solid #6e6e6e;border-radius:3px;box-sizing:border-box"></div>
<div class="t" style="left:198.60000000000002px;width:300px;text-align:right;top:478.5px;color:#000;letter-spacing:-0.368px;">7</div>
<div class="t" style="left:506.2px;top:478.5px;color:#000;font-size:12px;letter-spacing:-0.367px;">89654</div>
<div class="t" style="left:579px;top:478.5px;color:#000;font-size:12px;letter-spacing:-0.367px;">89654</div>
<div class="t" style="left:684.1px;top:478.5px;color:#000;font-size:12px;letter-spacing:0.068px;width:262px;overflow:hidden">Колбаски Говяжьи Черкизово</div>
<div class="t" style="left:952.6px;top:478.5px;color:#000;font-size:12px;letter-spacing:-0.072px;">кг</div>
<div class="t" style="left:711.6px;width:300px;text-align:right;top:478.5px;color:#000;letter-spacing:-0.830px;">10</div>
<div class="a" style="left:1025px;top:479px;width:13px;height:13px;background:#fff;border:1px solid #6e6e6e;border-radius:3px;box-sizing:border-box"></div>
<div class="t" style="left:816.5999999999999px;width:300px;text-align:right;top:478.5px;color:#000;letter-spacing:-0.341px;">519,974</div>
<div class="t" style="left:962.0px;width:300px;text-align:right;top:478.5px;color:#000;letter-spacing:-0.336px;">405,18</div>
<div class="t" style="left:1268.8px;top:478.5px;color:#000;font-size:12px;letter-spacing:-0.190px;">2_Поставщик</div>
<div class="t" style="left:1172.0px;width:300px;text-align:right;top:478.5px;color:#000;letter-spacing:-0.341px;">519,974</div>
<div class="t" style="left:1381.8999999999999px;width:300px;text-align:right;top:478.5px;color:#000;letter-spacing:-0.368px;">0</div>
<div class="a" style="left:1687px;top:477px;width:42px;height:18px;background:#fff;border:1px solid #c9c9c9;border-radius:4px;box-sizing:border-box"></div>
<div class="a" style="left:1702px;top:485px;width:11px;height:2px;background:#6a6a6a"></div>
<div class="a" style="left:410px;top:496px;width:1320px;height:22px;background:#fff"></div>
<div class="a" style="left:1047px;top:496px;width:145px;height:22px;background:#d5f7c0"></div>
<div class="a" style="left:1402px;top:496px;width:210px;height:22px;background:#feeaa5"></div>
<div class="a" style="left:1612px;top:496px;width:73px;height:22px;background:#e7b490"></div>
<div class="a" style="left:420px;top:501px;width:13px;height:13px;background:#fff;border:1px solid #6e6e6e;border-radius:3px;box-sizing:border-box"></div>
<div class="t" style="left:198.60000000000002px;width:300px;text-align:right;top:500.5px;color:#000;letter-spacing:-0.368px;">8</div>
<div class="t" style="left:506.2px;top:500.5px;color:#000;font-size:12px;letter-spacing:-0.367px;">56478</div>
<div class="t" style="left:579px;top:500.5px;color:#000;font-size:12px;letter-spacing:-0.367px;">56478</div>
<div class="t" style="left:684.1px;top:500.5px;color:#000;font-size:12px;letter-spacing:-0.095px;width:262px;overflow:hidden">Колбаски Куриные Черкизово</div>
<div class="t" style="left:952.6px;top:500.5px;color:#000;font-size:12px;letter-spacing:-0.072px;">кг</div>
<div class="t" style="left:711.6px;width:300px;text-align:right;top:500.5px;color:#000;letter-spacing:-0.830px;">10</div>
<div class="a" style="left:1025px;top:501px;width:13px;height:13px;background:#fff;border:1px solid #6e6e6e;border-radius:3px;box-sizing:border-box"></div>
<div class="t" style="left:816.5999999999999px;width:300px;text-align:right;top:500.5px;color:#000;letter-spacing:-0.336px;">481,46</div>
<div class="t" style="left:962.0px;width:300px;text-align:right;top:500.5px;color:#000;letter-spacing:-0.336px;">375,17</div>
<div class="t" style="left:1268.8px;top:500.5px;color:#000;font-size:12px;letter-spacing:-0.190px;">2_Поставщик</div>
<div class="t" style="left:1172.0px;width:300px;text-align:right;top:500.5px;color:#000;letter-spacing:-0.336px;">481,46</div>
<div class="t" style="left:1381.8999999999999px;width:300px;text-align:right;top:500.5px;color:#000;letter-spacing:-0.368px;">0</div>
<div class="a" style="left:1687px;top:499px;width:42px;height:18px;background:#fff;border:1px solid #c9c9c9;border-radius:4px;box-sizing:border-box"></div>
<div class="a" style="left:1702px;top:507px;width:11px;height:2px;background:#6a6a6a"></div>
<div class="a" style="left:410px;top:518px;width:1320px;height:22px;background:#fff"></div>
<div class="a" style="left:1047px;top:518px;width:145px;height:22px;background:#d5f7c0"></div>
<div class="a" style="left:1402px;top:518px;width:210px;height:22px;background:#feeaa5"></div>
<div class="a" style="left:1612px;top:518px;width:73px;height:22px;background:#e7b490"></div>
<div class="a" style="left:420px;top:523px;width:13px;height:13px;background:#fff;border:1px solid #6e6e6e;border-radius:3px;box-sizing:border-box"></div>
<div class="t" style="left:198.60000000000002px;width:300px;text-align:right;top:522.5px;color:#000;letter-spacing:-0.368px;">9</div>
<div class="t" style="left:506.2px;top:522.5px;color:#000;font-size:12px;letter-spacing:-0.367px;">14789</div>
<div class="t" style="left:579px;top:522.5px;color:#000;font-size:12px;letter-spacing:-0.367px;">14789</div>
<div class="t" style="left:684.1px;top:522.5px;color:#000;font-size:12px;letter-spacing:-0.096px;width:262px;overflow:hidden">Колбаски Свиные Черкизово</div>
<div class="t" style="left:952.6px;top:522.5px;color:#000;font-size:12px;letter-spacing:-0.072px;">кг</div>
<div class="t" style="left:711.6px;width:300px;text-align:right;top:522.5px;color:#000;letter-spacing:-0.830px;">10</div>
<div class="a" style="left:1025px;top:523px;width:13px;height:13px;background:#fff;border:1px solid #6e6e6e;border-radius:3px;box-sizing:border-box"></div>
<div class="t" style="left:816.5999999999999px;width:300px;text-align:right;top:522.5px;color:#000;letter-spacing:-0.341px;">496,412</div>
<div class="t" style="left:962.0px;width:300px;text-align:right;top:522.5px;color:#000;letter-spacing:-0.336px;">386,82</div>
<div class="t" style="left:1268.8px;top:522.5px;color:#000;font-size:12px;letter-spacing:-0.190px;">2_Поставщик</div>
<div class="t" style="left:1172.0px;width:300px;text-align:right;top:522.5px;color:#000;letter-spacing:-0.341px;">496,412</div>
<div class="t" style="left:1381.8999999999999px;width:300px;text-align:right;top:522.5px;color:#000;letter-spacing:-0.368px;">0</div>
<div class="a" style="left:1687px;top:521px;width:42px;height:18px;background:#fff;border:1px solid #c9c9c9;border-radius:4px;box-sizing:border-box"></div>
<div class="a" style="left:1702px;top:529px;width:11px;height:2px;background:#6a6a6a"></div>
<div class="a" style="left:410px;top:540px;width:1320px;height:22px;background:#fff"></div>
<div class="a" style="left:1047px;top:540px;width:145px;height:22px;background:#d5f7c0"></div>
<div class="a" style="left:1402px;top:540px;width:210px;height:22px;background:#feeaa5"></div>
<div class="a" style="left:1612px;top:540px;width:73px;height:22px;background:#e7b490"></div>
<div class="a" style="left:420px;top:545px;width:13px;height:13px;background:#fff;border:1px solid #6e6e6e;border-radius:3px;box-sizing:border-box"></div>
<div class="t" style="left:198.60000000000002px;width:300px;text-align:right;top:544.5px;color:#000;letter-spacing:-0.830px;">10</div>
<div class="t" style="left:506.2px;top:544.5px;color:#000;font-size:12px;letter-spacing:-0.367px;">25653</div>
<div class="t" style="left:579px;top:544.5px;color:#000;font-size:12px;letter-spacing:-0.367px;">25653</div>
<div class="t" style="left:684.1px;top:544.5px;color:#000;font-size:12px;letter-spacing:-0.095px;width:262px;overflow:hidden">Лопатка свиная охлажденная Белатмит</div>
<div class="t" style="left:952.6px;top:544.5px;color:#000;font-size:12px;letter-spacing:-0.072px;">кг</div>
<div class="t" style="left:711.6px;width:300px;text-align:right;top:544.5px;color:#000;letter-spacing:-0.830px;">10</div>
<div class="a" style="left:1025px;top:545px;width:13px;height:13px;background:#fff;border:1px solid #6e6e6e;border-radius:3px;box-sizing:border-box"></div>
<div class="t" style="left:816.5999999999999px;width:300px;text-align:right;top:544.5px;color:#000;letter-spacing:-0.341px;">484,162</div>
<div class="t" style="left:962.0px;width:300px;text-align:right;top:544.5px;color:#000;letter-spacing:-0.336px;">377,27</div>
<div class="t" style="left:1268.8px;top:544.5px;color:#000;font-size:12px;letter-spacing:-0.190px;">2_Поставщик</div>
<div class="t" style="left:1172.0px;width:300px;text-align:right;top:544.5px;color:#000;letter-spacing:-0.341px;">484,162</div>
<div class="t" style="left:1381.8999999999999px;width:300px;text-align:right;top:544.5px;color:#000;letter-spacing:-0.368px;">0</div>
<div class="a" style="left:1687px;top:543px;width:42px;height:18px;background:#fff;border:1px solid #c9c9c9;border-radius:4px;box-sizing:border-box"></div>
<div class="a" style="left:1702px;top:551px;width:11px;height:2px;background:#6a6a6a"></div>
<div class="a" style="left:410px;top:562px;width:1320px;height:22px;background:#fff"></div>
<div class="a" style="left:1047px;top:562px;width:145px;height:22px;background:#d5f7c0"></div>
<div class="a" style="left:1402px;top:562px;width:210px;height:22px;background:#feeaa5"></div>
<div class="a" style="left:1612px;top:562px;width:73px;height:22px;background:#e7b490"></div>
<div class="a" style="left:420px;top:567px;width:13px;height:13px;background:#fff;border:1px solid #6e6e6e;border-radius:3px;box-sizing:border-box"></div>
<div class="t" style="left:198.60000000000002px;width:300px;text-align:right;top:566.5px;color:#000;letter-spacing:-0.343px;">11</div>
<div class="t" style="left:506.2px;top:566.5px;color:#000;font-size:12px;letter-spacing:-0.367px;">35749</div>
<div class="t" style="left:579px;top:566.5px;color:#000;font-size:12px;letter-spacing:-0.367px;">35749</div>
<div class="t" style="left:684.1px;top:566.5px;color:#000;font-size:12px;letter-spacing:-0.090px;width:262px;overflow:hidden">Лопаточная часть говяжья охлажденная Бор...</div>
<div class="t" style="left:952.6px;top:566.5px;color:#000;font-size:12px;letter-spacing:-0.072px;">кг</div>
<div class="t" style="left:711.6px;width:300px;text-align:right;top:566.5px;color:#000;letter-spacing:-0.830px;">10</div>
<div class="a" style="left:1025px;top:567px;width:13px;height:13px;background:#fff;border:1px solid #6e6e6e;border-radius:3px;box-sizing:border-box"></div>
<div class="t" style="left:816.5999999999999px;width:300px;text-align:right;top:566.5px;color:#000;letter-spacing:-0.341px;">501,774</div>
<div class="t" style="left:1172.0px;width:300px;text-align:right;top:566.5px;color:#000;letter-spacing:-0.341px;">501,774</div>
<div class="t" style="left:1381.8999999999999px;width:300px;text-align:right;top:566.5px;color:#000;letter-spacing:-0.368px;">0</div>
<div class="a" style="left:1687px;top:565px;width:42px;height:18px;background:#fff;border:1px solid #c9c9c9;border-radius:4px;box-sizing:border-box"></div>
<div class="a" style="left:1702px;top:573px;width:11px;height:2px;background:#6a6a6a"></div>
<div class="a" style="left:410px;top:584px;width:1320px;height:22px;background:#fff"></div>
<div class="a" style="left:1047px;top:584px;width:145px;height:22px;background:#d5f7c0"></div>
<div class="a" style="left:1402px;top:584px;width:210px;height:22px;background:#feeaa5"></div>
<div class="a" style="left:1612px;top:584px;width:73px;height:22px;background:#e7b490"></div>
<div class="a" style="left:420px;top:589px;width:13px;height:13px;background:#fff;border:1px solid #6e6e6e;border-radius:3px;box-sizing:border-box"></div>
<div class="t" style="left:198.60000000000002px;width:300px;text-align:right;top:588.5px;color:#000;letter-spacing:-0.367px;">12</div>
<div class="t" style="left:506.2px;top:588.5px;color:#000;font-size:12px;letter-spacing:-0.367px;">35493</div>
<div class="t" style="left:579px;top:588.5px;color:#000;font-size:12px;letter-spacing:-0.367px;">35493</div>
<div class="t" style="left:684.1px;top:588.5px;color:#000;font-size:12px;letter-spacing:-0.091px;width:262px;overflow:hidden">Тазобедренная часть говяжья охлажденная Б...</div>
<div class="t" style="left:952.6px;top:588.5px;color:#000;font-size:12px;letter-spacing:-0.072px;">кг</div>
<div class="t" style="left:711.6px;width:300px;text-align:right;top:588.5px;color:#000;letter-spacing:-0.830px;">10</div>
<div class="a" style="left:1025px;top:589px;width:13px;height:13px;background:#fff;border:1px solid #6e6e6e;border-radius:3px;box-sizing:border-box"></div>
<div class="t" style="left:816.5999999999999px;width:300px;text-align:right;top:588.5px;color:#000;letter-spacing:-0.330px;">507,5</div>
<div class="t" style="left:962.0px;width:300px;text-align:right;top:588.5px;color:#000;letter-spacing:-0.336px;">395,45</div>
<div class="t" style="left:1268.8px;top:588.5px;color:#000;font-size:12px;letter-spacing:-0.190px;">2_Поставщик</div>
<div class="t" style="left:1172.0px;width:300px;text-align:right;top:588.5px;color:#000;letter-spacing:-0.330px;">507,5</div>
<div class="t" style="left:1381.8999999999999px;width:300px;text-align:right;top:588.5px;color:#000;letter-spacing:-0.368px;">0</div>
<div class="a" style="left:1687px;top:587px;width:42px;height:18px;background:#fff;border:1px solid #c9c9c9;border-radius:4px;box-sizing:border-box"></div>
<div class="a" style="left:1702px;top:595px;width:11px;height:2px;background:#6a6a6a"></div>
<div class="a" style="left:410px;top:606px;width:1320px;height:22px;background:#fff"></div>
<div class="a" style="left:1047px;top:606px;width:145px;height:22px;background:#d5f7c0"></div>
<div class="a" style="left:1402px;top:606px;width:210px;height:22px;background:#feeaa5"></div>
<div class="a" style="left:1612px;top:606px;width:73px;height:22px;background:#e7b490"></div>
<div class="a" style="left:420px;top:611px;width:13px;height:13px;background:#fff;border:1px solid #6e6e6e;border-radius:3px;box-sizing:border-box"></div>
<div class="t" style="left:198.60000000000002px;width:300px;text-align:right;top:610.5px;color:#000;letter-spacing:-0.367px;">13</div>
<div class="t" style="left:506.2px;top:610.5px;color:#000;font-size:12px;letter-spacing:-0.367px;">34618</div>
<div class="t" style="left:579px;top:610.5px;color:#000;font-size:12px;letter-spacing:-0.367px;">34618</div>
<div class="t" style="left:684.1px;top:610.5px;color:#000;font-size:12px;letter-spacing:-0.091px;width:262px;overflow:hidden">Тазобедренная часть свиная охлажденная Бо...</div>
<div class="t" style="left:952.6px;top:610.5px;color:#000;font-size:12px;letter-spacing:-0.072px;">кг</div>
<div class="t" style="left:711.6px;width:300px;text-align:right;top:610.5px;color:#000;letter-spacing:-0.830px;">10</div>
<div class="a" style="left:1025px;top:611px;width:13px;height:13px;background:#fff;border:1px solid #6e6e6e;border-radius:3px;box-sizing:border-box"></div>
<div class="t" style="left:816.5999999999999px;width:300px;text-align:right;top:610.5px;color:#000;letter-spacing:-0.341px;">467,768</div>
<div class="t" style="left:962.0px;width:300px;text-align:right;top:610.5px;color:#000;letter-spacing:-0.330px;">364,5</div>
<div class="t" style="left:1268.8px;top:610.5px;color:#000;font-size:12px;letter-spacing:-0.190px;">2_Поставщик</div>
<div class="t" style="left:1172.0px;width:300px;text-align:right;top:610.5px;color:#000;letter-spacing:-0.341px;">467,768</div>
<div class="t" style="left:1381.8999999999999px;width:300px;text-align:right;top:610.5px;color:#000;letter-spacing:-0.368px;">0</div>
<div class="a" style="left:1687px;top:609px;width:42px;height:18px;background:#fff;border:1px solid #c9c9c9;border-radius:4px;box-sizing:border-box"></div>
<div class="a" style="left:1702px;top:617px;width:11px;height:2px;background:#6a6a6a"></div>
<div class="a" style="left:410px;top:628px;width:1320px;height:22px;background:#fff"></div>
<div class="a" style="left:1047px;top:628px;width:145px;height:22px;background:#d5f7c0"></div>
<div class="a" style="left:1402px;top:628px;width:210px;height:22px;background:#feeaa5"></div>
<div class="a" style="left:1612px;top:628px;width:73px;height:22px;background:#e7b490"></div>
<div class="a" style="left:420px;top:633px;width:13px;height:13px;background:#fff;border:1px solid #6e6e6e;border-radius:3px;box-sizing:border-box"></div>
<div class="t" style="left:198.60000000000002px;width:300px;text-align:right;top:632.5px;color:#000;letter-spacing:-0.367px;">14</div>
<div class="t" style="left:506.2px;top:632.5px;color:#000;font-size:12px;letter-spacing:-0.367px;">81622</div>
<div class="t" style="left:579px;top:632.5px;color:#000;font-size:12px;letter-spacing:-0.367px;">81622</div>
<div class="t" style="left:684.1px;top:632.5px;color:#000;font-size:12px;letter-spacing:-0.092px;width:262px;overflow:hidden">Шея свиная охлажденная вес Борисовский м...</div>
<div class="t" style="left:952.6px;top:632.5px;color:#000;font-size:12px;letter-spacing:-0.072px;">кг</div>
<div class="t" style="left:711.6px;width:300px;text-align:right;top:632.5px;color:#000;letter-spacing:-0.830px;">10</div>
<div class="a" style="left:1025px;top:633px;width:13px;height:13px;background:#fff;border:1px solid #6e6e6e;border-radius:3px;box-sizing:border-box"></div>
<div class="t" style="left:816.5999999999999px;width:300px;text-align:right;top:632.5px;color:#000;letter-spacing:-0.336px;">501,69</div>
<div class="t" style="left:962.0px;width:300px;text-align:right;top:632.5px;color:#000;letter-spacing:-0.336px;">390,91</div>
<div class="t" style="left:1268.8px;top:632.5px;color:#000;font-size:12px;letter-spacing:-0.190px;">2_Поставщик</div>
<div class="t" style="left:1172.0px;width:300px;text-align:right;top:632.5px;color:#000;letter-spacing:-0.336px;">501,69</div>
<div class="t" style="left:1381.8999999999999px;width:300px;text-align:right;top:632.5px;color:#000;letter-spacing:-0.368px;">0</div>
<div class="a" style="left:1687px;top:631px;width:42px;height:18px;background:#fff;border:1px solid #c9c9c9;border-radius:4px;box-sizing:border-box"></div>
<div class="a" style="left:1702px;top:639px;width:11px;height:2px;background:#6a6a6a"></div>
<div class="a" style="left:410px;top:650px;width:1320px;height:22px;background:#fff"></div>
<div class="a" style="left:1047px;top:650px;width:145px;height:22px;background:#d5f7c0"></div>
<div class="a" style="left:1402px;top:650px;width:210px;height:22px;background:#feeaa5"></div>
<div class="a" style="left:1612px;top:650px;width:73px;height:22px;background:#e7b490"></div>
<div class="a" style="left:420px;top:655px;width:13px;height:13px;background:#fff;border:1px solid #6e6e6e;border-radius:3px;box-sizing:border-box"></div>
<div class="t" style="left:198.60000000000002px;width:300px;text-align:right;top:654.5px;color:#000;letter-spacing:-0.367px;">15</div>
<div class="t" style="left:506.2px;top:654.5px;color:#000;font-size:12px;letter-spacing:-0.317px;">48109530...</div>
<div class="t" style="left:579px;top:654.5px;color:#000;font-size:12px;letter-spacing:-0.367px;">4810953027278</div>
<div class="t" style="left:684.1px;top:654.5px;color:#000;font-size:12px;letter-spacing:-0.094px;width:262px;overflow:hidden">Ветчина домашняя 350 гр Черкизово</div>
<div class="t" style="left:952.6px;top:654.5px;color:#000;font-size:12px;letter-spacing:-0.113px;">шт</div>
<div class="t" style="left:711.6px;width:300px;text-align:right;top:654.5px;color:#000;letter-spacing:-0.830px;">10</div>
<div class="a" style="left:1025px;top:655px;width:13px;height:13px;background:#fff;border:1px solid #6e6e6e;border-radius:3px;box-sizing:border-box"></div>
<div class="t" style="left:816.5999999999999px;width:300px;text-align:right;top:654.5px;color:#000;letter-spacing:-0.336px;">408,31</div>
<div class="t" style="left:962.0px;width:300px;text-align:right;top:654.5px;color:#000;letter-spacing:-0.336px;">318,18</div>
<div class="t" style="left:1268.8px;top:654.5px;color:#000;font-size:12px;letter-spacing:-0.190px;">2_Поставщик</div>
<div class="t" style="left:1172.0px;width:300px;text-align:right;top:654.5px;color:#000;letter-spacing:-0.336px;">408,31</div>
<div class="t" style="left:1381.8999999999999px;width:300px;text-align:right;top:654.5px;color:#000;letter-spacing:-0.368px;">0</div>
<div class="a" style="left:1687px;top:653px;width:42px;height:18px;background:#fff;border:1px solid #c9c9c9;border-radius:4px;box-sizing:border-box"></div>
<div class="a" style="left:1702px;top:661px;width:11px;height:2px;background:#6a6a6a"></div>
<div class="a" style="left:410px;top:672px;width:1320px;height:22px;background:#fff"></div>
<div class="a" style="left:1047px;top:672px;width:145px;height:22px;background:#d5f7c0"></div>
<div class="a" style="left:1402px;top:672px;width:210px;height:22px;background:#feeaa5"></div>
<div class="a" style="left:1612px;top:672px;width:73px;height:22px;background:#e7b490"></div>
<div class="a" style="left:420px;top:677px;width:13px;height:13px;background:#fff;border:1px solid #6e6e6e;border-radius:3px;box-sizing:border-box"></div>
<div class="t" style="left:198.60000000000002px;width:300px;text-align:right;top:676.5px;color:#000;letter-spacing:-0.367px;">16</div>
<div class="t" style="left:506.2px;top:676.5px;color:#000;font-size:12px;letter-spacing:-0.357px;">10114</div>
<div class="t" style="left:579px;top:676.5px;color:#000;font-size:12px;letter-spacing:-0.357px;">10114</div>
<div class="t" style="left:684.1px;top:676.5px;color:#000;font-size:12px;letter-spacing:-0.095px;width:262px;overflow:hidden">Колбаса Докторская вар Дымов</div>
<div class="t" style="left:952.6px;top:676.5px;color:#000;font-size:12px;letter-spacing:-0.072px;">кг</div>
<div class="t" style="left:711.6px;width:300px;text-align:right;top:676.5px;color:#000;letter-spacing:-0.830px;">10</div>
<div class="a" style="left:1025px;top:677px;width:13px;height:13px;background:#fff;border:1px solid #6e6e6e;border-radius:3px;box-sizing:border-box"></div>
<div class="t" style="left:816.5999999999999px;width:300px;text-align:right;top:676.5px;color:#000;letter-spacing:-0.336px;">618,31</div>
<div class="t" style="left:962.0px;width:300px;text-align:right;top:676.5px;color:#000;letter-spacing:-0.336px;">481,82</div>
<div class="t" style="left:1268.8px;top:676.5px;color:#000;font-size:12px;letter-spacing:-0.190px;">2_Поставщик</div>
<div class="t" style="left:1172.0px;width:300px;text-align:right;top:676.5px;color:#000;letter-spacing:-0.336px;">618,31</div>
<div class="t" style="left:1381.8999999999999px;width:300px;text-align:right;top:676.5px;color:#000;letter-spacing:-0.368px;">0</div>
<div class="a" style="left:1687px;top:675px;width:42px;height:18px;background:#fff;border:1px solid #c9c9c9;border-radius:4px;box-sizing:border-box"></div>
<div class="a" style="left:1702px;top:683px;width:11px;height:2px;background:#6a6a6a"></div>
<div class="a" style="left:410px;top:694px;width:1320px;height:22px;background:#fff"></div>
<div class="a" style="left:1047px;top:694px;width:145px;height:22px;background:#d5f7c0"></div>
<div class="a" style="left:1402px;top:694px;width:210px;height:22px;background:#feeaa5"></div>
<div class="a" style="left:1612px;top:694px;width:73px;height:22px;background:#e7b490"></div>
<div class="a" style="left:420px;top:699px;width:13px;height:13px;background:#fff;border:1px solid #6e6e6e;border-radius:3px;box-sizing:border-box"></div>
<div class="t" style="left:198.60000000000002px;width:300px;text-align:right;top:698.5px;color:#000;letter-spacing:-0.367px;">17</div>
<div class="t" style="left:506.2px;top:698.5px;color:#000;font-size:12px;letter-spacing:-0.357px;">10115</div>
<div class="t" style="left:579px;top:698.5px;color:#000;font-size:12px;letter-spacing:-0.357px;">10115</div>
<div class="t" style="left:684.1px;top:698.5px;color:#000;font-size:12px;letter-spacing:-0.095px;width:262px;overflow:hidden">Колбаса Молочная вар Черкизово</div>
<div class="t" style="left:952.6px;top:698.5px;color:#000;font-size:12px;letter-spacing:-0.072px;">кг</div>
<div class="t" style="left:711.6px;width:300px;text-align:right;top:698.5px;color:#000;letter-spacing:-0.830px;">10</div>
<div class="a" style="left:1025px;top:699px;width:13px;height:13px;background:#fff;border:1px solid #6e6e6e;border-radius:3px;box-sizing:border-box"></div>
<div class="t" style="left:816.5999999999999px;width:300px;text-align:right;top:698.5px;color:#000;letter-spacing:-0.336px;">641,69</div>
<div class="t" style="left:962.0px;width:300px;text-align:right;top:698.5px;color:#000;letter-spacing:-0.367px;">500</div>
<div class="t" style="left:1268.8px;top:698.5px;color:#000;font-size:12px;letter-spacing:-0.190px;">2_Поставщик</div>
<div class="t" style="left:1172.0px;width:300px;text-align:right;top:698.5px;color:#000;letter-spacing:-0.336px;">641,69</div>
<div class="t" style="left:1381.8999999999999px;width:300px;text-align:right;top:698.5px;color:#000;letter-spacing:-0.368px;">0</div>
<div class="a" style="left:1687px;top:697px;width:42px;height:18px;background:#fff;border:1px solid #c9c9c9;border-radius:4px;box-sizing:border-box"></div>
<div class="a" style="left:1702px;top:705px;width:11px;height:2px;background:#6a6a6a"></div>
<div class="a" style="left:410px;top:364px;width:1320px;height:1px;background:#e3e3e3"></div>
<div class="a" style="left:410px;top:386px;width:1320px;height:1px;background:#e3e3e3"></div>
<div class="a" style="left:410px;top:408px;width:1320px;height:1px;background:#e3e3e3"></div>
<div class="a" style="left:410px;top:430px;width:1320px;height:1px;background:#e3e3e3"></div>
<div class="a" style="left:410px;top:452px;width:1320px;height:1px;background:#e3e3e3"></div>
<div class="a" style="left:410px;top:474px;width:1320px;height:1px;background:#e3e3e3"></div>
<div class="a" style="left:410px;top:496px;width:1320px;height:1px;background:#e3e3e3"></div>
<div class="a" style="left:410px;top:518px;width:1320px;height:1px;background:#e3e3e3"></div>
<div class="a" style="left:410px;top:540px;width:1320px;height:1px;background:#e3e3e3"></div>
<div class="a" style="left:410px;top:562px;width:1320px;height:1px;background:#e3e3e3"></div>
<div class="a" style="left:410px;top:584px;width:1320px;height:1px;background:#e3e3e3"></div>
<div class="a" style="left:410px;top:606px;width:1320px;height:1px;background:#e3e3e3"></div>
<div class="a" style="left:410px;top:628px;width:1320px;height:1px;background:#e3e3e3"></div>
<div class="a" style="left:410px;top:650px;width:1320px;height:1px;background:#e3e3e3"></div>
<div class="a" style="left:410px;top:672px;width:1320px;height:1px;background:#e3e3e3"></div>
<div class="a" style="left:410px;top:694px;width:1320px;height:1px;background:#e3e3e3"></div>
<div class="a" style="left:410px;top:716px;width:1320px;height:1px;background:#e3e3e3"></div>
<div class="a" style="left:410px;top:342px;width:1320px;height:1px;background:#e3e3e3"></div>
<div class="a" style="left:442px;top:342px;width:1px;height:374px;background:#e3e3e3"></div>
<div class="a" style="left:502px;top:342px;width:1px;height:374px;background:#e3e3e3"></div>
<div class="a" style="left:574px;top:342px;width:1px;height:374px;background:#e3e3e3"></div>
<div class="a" style="left:679px;top:342px;width:1px;height:374px;background:#e3e3e3"></div>
<div class="a" style="left:948px;top:342px;width:1px;height:374px;background:#e3e3e3"></div>
<div class="a" style="left:974px;top:342px;width:1px;height:374px;background:#e3e3e3"></div>
<div class="a" style="left:1014px;top:342px;width:1px;height:374px;background:#e3e3e3"></div>
<div class="a" style="left:1047px;top:342px;width:1px;height:374px;background:#e3e3e3"></div>
<div class="a" style="left:1119px;top:342px;width:1px;height:374px;background:#e3e3e3"></div>
<div class="a" style="left:1192px;top:342px;width:1px;height:374px;background:#e3e3e3"></div>
<div class="a" style="left:1265px;top:342px;width:1px;height:374px;background:#e3e3e3"></div>
<div class="a" style="left:1402px;top:342px;width:1px;height:374px;background:#e3e3e3"></div>
<div class="a" style="left:1475px;top:342px;width:1px;height:374px;background:#e3e3e3"></div>
<div class="a" style="left:1612px;top:342px;width:1px;height:374px;background:#e3e3e3"></div>
<div class="a" style="left:1685px;top:342px;width:1px;height:374px;background:#e3e3e3"></div>
<div class="a" style="left:412px;top:293px;width:30px;height:430px;border:3px solid #fb3c3c;box-sizing:border-box"></div>
<div class="a" style="left:1396px;top:282px;width:90px;height:436px;border:3px solid #fb3c3c;box-sizing:border-box"></div>
<div class="a" style="left:409px;top:798px;width:28px;height:22px;background:#d4e3e8;border-radius:5px"></div>
<svg class="a" style="left:414px;top:801px" width="18" height="16" viewBox="0 0 18 16"><circle cx="3" cy="3" r="1.7" fill="none" stroke="#1ea7e8" stroke-width="1.2"/><circle cx="3" cy="8" r="1.7" fill="none" stroke="#1ea7e8" stroke-width="1.2"/><circle cx="3" cy="13" r="1.7" fill="none" stroke="#1ea7e8" stroke-width="1.2"/><line x1="7.5" y1="3.5" x2="16.5" y2="3.5" stroke="#111" stroke-width="1.3"/><line x1="7.5" y1="8.3" x2="16.5" y2="8.3" stroke="#111" stroke-width="1.3"/><line x1="7.5" y1="13.3" x2="16.5" y2="13.3" stroke="#111" stroke-width="1.3"/></svg>
<svg class="a" style="left:442px;top:800px" width="18" height="18" viewBox="0 0 18 18"><rect x="1.7" y="1.7" width="15" height="15" rx="1.2" fill="#fff" stroke="#111" stroke-width="1.4"/><line x1="6.5" y1="2" x2="6.5" y2="16" stroke="#1ea7e8" stroke-width="1"/><line x1="11.5" y1="2" x2="11.5" y2="16" stroke="#1ea7e8" stroke-width="1"/><line x1="2" y1="6.5" x2="16" y2="6.5" stroke="#1ea7e8" stroke-width="1"/><line x1="2" y1="11.5" x2="16" y2="11.5" stroke="#1ea7e8" stroke-width="1"/></svg>
<svg class="a" style="left:475px;top:802px" width="18" height="16" viewBox="0 0 18 16"><line x1="0.5" y1="1.5" x2="16" y2="1.5" stroke="#111" stroke-width="1.2"/><line x1="2.5" y1="5.5" x2="13.5" y2="5.5" stroke="#1ea7e8" stroke-width="1.2"/><line x1="4.5" y1="9.5" x2="11.5" y2="9.5" stroke="#111" stroke-width="1.2"/><line x1="6.2" y1="13.5" x2="9.8" y2="13.5" stroke="#1ea7e8" stroke-width="1.2"/></svg>
<div class="a" style="left:501px;top:798px;width:28px;height:22px;background:#d4e3e8;border-radius:5px"></div>
<svg class="a" style="left:505px;top:799px" width="20" height="20" viewBox="0 0 20 20"><path d="M8.57 5.21 L8.65 2.93 L11.35 2.93 L11.43 5.21 L13.34 6.32 L15.36 5.24 L16.71 7.59 L14.77 8.80 L14.77 11.00 L16.71 12.21 L15.36 14.56 L13.34 13.48 L11.43 14.59 L11.35 16.87 L8.65 16.87 L8.57 14.59 L6.66 13.48 L4.64 14.56 L3.29 12.21 L5.23 11.00 L5.23 8.80 L3.29 7.59 L4.64 5.24 L6.66 6.32 Z" fill="none" stroke="#111" stroke-width="1.3" stroke-linejoin="round"/><circle cx="10" cy="10" r="2.6" fill="none" stroke="#1ea7e8" stroke-width="1.3"/></svg>
<svg class="a" style="left:539px;top:800px" width="18" height="18" viewBox="0 0 18 18"><text x="1" y="6" font-size="5.5" fill="#1ea7e8" font-family="Liberation Sans" font-weight="bold">1</text><text x="0.5" y="12" font-size="5.5" fill="#1ea7e8" font-family="Liberation Sans" font-weight="bold">2</text><text x="0.5" y="18" font-size="5.5" fill="#1ea7e8" font-family="Liberation Sans" font-weight="bold">3</text><line x1="6.5" y1="3.5" x2="15.5" y2="3.5" stroke="#111" stroke-width="1.2"/><line x1="6.5" y1="9.3" x2="15.5" y2="9.3" stroke="#111" stroke-width="1.2"/><line x1="6.5" y1="15.4" x2="15.5" y2="15.4" stroke="#111" stroke-width="1.2"/></svg>
<svg class="a" style="left:567px;top:800px" width="18" height="18" viewBox="0 0 18 18"><line x1="0.5" y1="2.3" x2="15.8" y2="2.3" stroke="#111" stroke-width="1.2"/><line x1="0.5" y1="6.5" x2="15.8" y2="6.5" stroke="#111" stroke-width="1.2"/><line x1="0.5" y1="10.7" x2="7" y2="10.7" stroke="#111" stroke-width="1.2"/><line x1="0.5" y1="14.5" x2="7" y2="14.5" stroke="#111" stroke-width="1.2"/><line x1="9" y1="12.5" x2="16" y2="12.5" stroke="#1ea7e8" stroke-width="1.2"/><line x1="12.5" y1="9" x2="12.5" y2="16" stroke="#1ea7e8" stroke-width="1.2"/></svg>
<svg class="a" style="left:598px;top:800px" width="18" height="18" viewBox="0 0 18 18"><path d="M6.5 5.3 H2.8 Q1.8 5.3 1.8 6.3 V15 Q1.8 16 2.8 16 H12 Q13 16 13 15 V11" fill="none" stroke="#333" stroke-width="1.4"/><line x1="7" y1="10.5" x2="15.5" y2="2" stroke="#1ea7e8" stroke-width="1.2"/><polyline points="10.5,1.8 15.8,1.8 15.8,7" fill="none" stroke="#1ea7e8" stroke-width="1.2"/></svg>
<svg class="a" style="left:630px;top:800px" width="18" height="18" viewBox="0 0 18 18"><polyline points="1.5,14.5 1.5,4 14,4" fill="none" stroke="#111" stroke-width="1.2"/><polyline points="10.5,1 14,4 10.5,7" fill="none" stroke="#111" stroke-width="1.2"/><polyline points="16.2,3.5 16.2,13 4,13" fill="none" stroke="#1ea7e8" stroke-width="1.2"/><polyline points="7.5,10 4,13 7.5,16" fill="none" stroke="#1ea7e8" stroke-width="1.2"/></svg>
<div class="a" style="left:1365px;top:802px;width:13px;height:13px;background:#fff;border:1px solid #5f5f5f;border-radius:3px;box-sizing:border-box"></div>
<div class="t" style="left:1380.1px;top:803.3px;color:#000;font-size:12px;letter-spacing:-0.265px;">Активные (F10)</div>
<div class="a" style="left:1471px;top:802px;width:13px;height:13px;background:#fff;border:1px solid #5f5f5f;border-radius:3px;box-sizing:border-box"></div>
<div class="t" style="left:1485.9px;top:803.3px;color:#000;font-size:12px;letter-spacing:-0.095px;">Отмеченные строки (F11)</div>
<div class="a" style="left:1630px;top:798px;width:101px;height:22px;background:#fff;border:1px solid #c9c9c9;border-radius:4px;box-sizing:border-box"></div>
<svg class="a" style="left:1645px;top:803px" width="12" height="12" viewBox="0 0 12 12"><line x1="0.5" y1="5.5" x2="11" y2="5.5" stroke="#333" stroke-width="1.4"/><line x1="5.7" y1="0.3" x2="5.7" y2="11" stroke="#333" stroke-width="1.4"/></svg>
<div class="t" style="left:1663.6px;top:802.4px;color:#000;font-size:12px;letter-spacing:-0.131px;">Добавить</div>
<div class="a" style="left:1272px;top:829px;width:42px;height:22px;background:#fff;border:1px solid #c9c9c9;border-radius:4px;box-sizing:border-box"></div>
<svg class="a" style="left:1285px;top:832px" width="16" height="16" viewBox="0 0 16 16"><path d="M2.8 6.2 A5.5 5.5 0 0 1 12.6 4.3" fill="none" stroke="#111" stroke-width="1.4"/><polygon points="13.8,1.5 13.8,6.2 9.4,5.3" fill="#111"/><path d="M13.2 9.8 A5.5 5.5 0 0 1 3.4 11.7" fill="none" stroke="#1ea7e8" stroke-width="1.4"/><polygon points="2.2,14.5 2.2,9.8 6.6,10.7" fill="#1ea7e8"/></svg>
<div class="a" style="left:1318px;top:829px;width:106px;height:22px;background:#fff;border:1px solid #c9c9c9;border-radius:4px;box-sizing:border-box"></div>
<svg class="a" style="left:1332px;top:833px" width="14" height="14" viewBox="0 0 14 14"><path d="M2.5 1.3 H9.5 L12.2 4 V11.3 Q12.2 12.5 11 12.5 H2.5 Q1.3 12.5 1.3 11.3 V2.5 Q1.3 1.3 2.5 1.3 Z" fill="none" stroke="#333" stroke-width="1.4"/><polyline points="3.5,12.3 3.5,8.2 10,8.2 10,12.3" fill="none" stroke="#1ea7e8" stroke-width="1.2"/></svg>
<div class="t" style="left:1351.1px;top:832.5px;color:#8a8a8a;font-size:12px;letter-spacing:-0.305px;">Сохранить</div>
<div class="a" style="left:1428px;top:829px;width:101px;height:22px;background:#fff;border:1px solid #c9c9c9;border-radius:4px;box-sizing:border-box"></div>
<svg class="a" style="left:1442px;top:831px" width="14" height="16" viewBox="0 0 14 16"><line x1="1" y1="3.5" x2="12.5" y2="3.5" stroke="#1ea7e8" stroke-width="1.2"/><polyline points="5,3.3 5,1.5 8.5,1.5 8.5,3.3" fill="none" stroke="#1ea7e8" stroke-width="1.1"/><polyline points="3,5.5 3,14.3 10.5,14.3 10.5,5.5" fill="none" stroke="#333" stroke-width="1.4"/></svg>
<div class="t" style="left:1461.2px;top:832.5px;color:#8a8a8a;font-size:12px;letter-spacing:-0.255px;">Отменить</div>
<div class="a" style="left:1533px;top:829px;width:101px;height:22px;background:#fff;border:1px solid #c9c9c9;border-radius:4px;box-sizing:border-box"></div>
<svg class="a" style="left:1547px;top:834px" width="14" height="12" viewBox="0 0 14 12"><polyline points="1,6.5 4.5,10.5 13,1" fill="none" stroke="#111" stroke-width="1.4"/></svg>
<div class="t" style="left:1567px;top:832.5px;color:#000;font-size:12px;letter-spacing:-0.199px;">Провести</div>
<div class="a" style="left:1638px;top:829px;width:93px;height:22px;background:#fff;border:1px solid #c9c9c9;border-radius:4px;box-sizing:border-box"></div>
<svg class="a" style="left:1653px;top:834px" width="12" height="12" viewBox="0 0 12 12"><line x1="1" y1="1" x2="11" y2="11" stroke="#111" stroke-width="1.3"/><line x1="11" y1="1" x2="1" y2="11" stroke="#111" stroke-width="1.3"/></svg>
<div class="t" style="left:1671px;top:832.5px;color:#000;font-size:12px;letter-spacing:-0.231px;">Закрыть</div>
</body></html>
